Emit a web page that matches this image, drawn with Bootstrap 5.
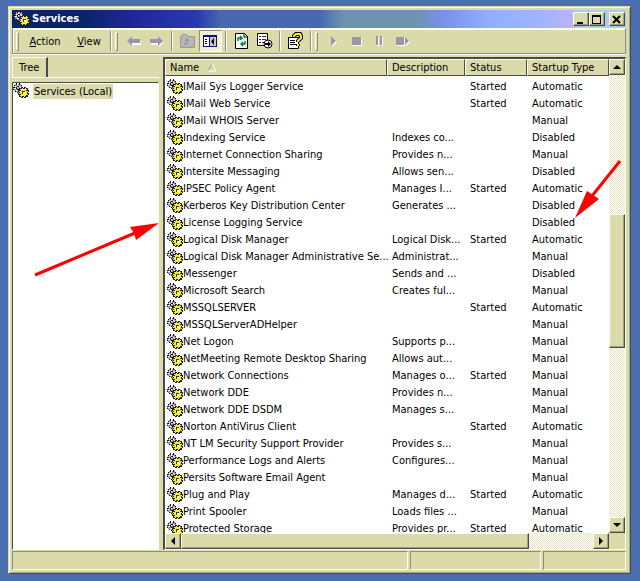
<!DOCTYPE html>
<html lang="en">
<head>
<meta charset="utf-8">
<meta name="viewport" content="width=device-width, initial-scale=1">
<title>Services</title>
<link href="https://cdn.jsdelivr.net/npm/bootstrap@5.3.0/dist/css/bootstrap.min.css" rel="stylesheet">
<style>
:root{--face:#dadaaa;--dk:#8c8c8c;--sh:#4a4a4a;--lt:#fffff0}
body{background:#4a6eae;font:11px/17px "DejaVu Sans Condensed","Noto Sans",sans-serif;color:#000;padding:6px 9px 7px 8px}
button{font:inherit;color:inherit;padding:0;border:0;background:none}
.win{background:var(--face);border:1px solid var(--face);border-right-color:var(--sh);border-bottom-color:var(--sh);box-shadow:inset 1px 1px var(--lt),inset -1px -1px #a8a888;padding:3px 4px 3px 3px}
.titlebar{height:18px;background:linear-gradient(90deg,#0a246a 0,#0a246a 12%,#20289a 20%,#2838b0 30%,#4568ae 34%,#4568ae 50%,#6c94b0 54%,#6c94b0 66%,#7890e8 70%,#90b0ff 78%,#a0b4ff 86%,#b8b4f4 91%,#a8ccf4 93%,#a8ccf4 100%);color:#fff;padding:0 1px 0 2px}
.titlebar h1{font:bold 11px/18px "DejaVu Sans Condensed","Noto Sans",sans-serif;padding-left:2px}
.raised{background:var(--face);border:1px solid var(--lt);border-right-color:var(--sh);border-bottom-color:var(--sh);box-shadow:inset -1px -1px #a0a080}
.capbtn{width:16px;height:14px}
.toolbar{height:26px;border:1px solid var(--dk);border-top-color:var(--lt);box-shadow:inset 1px 1px var(--lt),0 1px var(--lt);padding-left:3px}
.grip{width:3px;height:19px;border:1px solid var(--lt);border-right-color:var(--dk);border-bottom-color:var(--dk)}
.rule{width:2px;height:20px;margin:0 3px;border-left:1px solid var(--dk);border-right:1px solid var(--lt)}
.menu1{width:52px}.menu2{width:36px}
.toolbtn{width:23px;height:22px}
.pressed{border:1px solid var(--dk);border-right-color:var(--lt);border-bottom-color:var(--lt);background:#f0f0d8}
.panes{padding-top:3px}
.tree{width:147px}
.treetab{width:36px;height:20px;border-top:1px solid var(--lt);border-left:1px solid var(--lt);border-right:2px solid var(--sh);padding-left:6px;text-align:left}
.treebody{border-top:1px solid var(--lt);padding-top:4px}
.sunken{background:#fff;border:2px solid var(--sh);border-right:1px solid var(--lt);border-bottom:1px solid var(--lt)}
.treebox{border-width:1px}
.treeitem{background:var(--face);padding:0 1px;line-height:15px}
.listpane{display:grid;grid-template-columns:minmax(0,1fr) 16px;grid-template-rows:minmax(0,1fr) 16px}
.svc{table-layout:fixed;width:100%;border-collapse:separate;border-spacing:0}
.svc th{height:17px;line-height:15px;font-weight:400;background:var(--face);border:1px solid var(--lt);border-right-color:var(--sh);border-bottom-color:var(--sh);padding:0 4px;white-space:nowrap}
.svc td{height:17px;line-height:17px;padding:0 0 0 5px;white-space:nowrap}
.svc td:first-child{padding-left:2px}
.svc tbody::before{content:"";display:block;height:2px}
.c1{width:222px}.c2{width:78px}.c3{width:62px}
.track{background:repeating-conic-gradient(#fff 0 25%,#e4e4c0 0 50%) 0 0/2px 2px}
.corner{background:var(--face)}
.sb{width:16px;height:16px;flex:none}
.vgap1{flex:139 1 0}.vthumb{flex:133 1 0}.vgap2{flex:169 1 0}
.hthumb{flex:1 1 350px}.hgap{flex:0 0 64px}
.statusbar{height:20px;padding-top:1px;gap:2px}
.cell{border:1px solid var(--dk);border-right-color:var(--lt);border-bottom-color:var(--lt)}
.st2{width:131px}.st3{width:83px}
.notes{left:0;top:0;pointer-events:none}
svg{display:block;flex:none}
</style>
<script src="https://cdn.jsdelivr.net/npm/bootstrap@5.3.0/dist/js/bootstrap.bundle.min.js"></script>
</head>
<body class="vh-100 overflow-hidden d-flex flex-column position-relative">
<svg class="d-none"><defs>
<symbol id="gears" viewBox="0 0 16 16">
<g shape-rendering="crispEdges">
<path d="M3 0h1v1h2V0h1v1h1v1h1v2h1v3H9v1H8v1H6v1H4V9H2V8H1V7H0V4h1V2h1V1h1z" fill="#9a9aa8"/>
<path d="M3 0h1v2H3zM6 0h1v2H6zM1 2h1v1H1zM8 2h1v1H8zM0 4h2v1H0zM0 6h1v1H0zM2 8h1v1H2zM4 3h2v1H4zM3 4h1v2H3zM4 6h2v1H4zM4 9h1v1H4z" fill="#111"/>
<path d="M4 1h1v2H4zM2 3h1v1H2zM1 5h2v1H1zM3 7h2v1H3zM6 3h1v1H6zM7 4h2v1H7zM4 4h1v1H4z" fill="#fff"/>
<path d="M8 4h2v1h1V4h2v1h2v2h1v2h-1v1h1v2h-1v2h-2v1h-2v-1h-1v1H8v-1H6v-2H5v-2h1V9H5V7h1V5h2z" fill="#222"/>
<path d="M9 5h1v1h2V5h1v1h1v1h-1v1h2v1h-1v2h1v1h-2v1h1v0h-2v1h-1v-1H9v1H8v-1H7v-1h1v-1H6v-1h1V9H6V8h2V7H7V6h2z" fill="#f2ee30"/>
<path d="M9 8h3v3H9z" fill="#333"/><path d="M10 9h2v2h-2z" fill="#fff"/>
</g>
</symbol></defs></svg>
<main class="win flex-grow-1 d-flex flex-column overflow-hidden">
<header class="titlebar d-flex align-items-center flex-shrink-0">
<svg width="16" height="16"><use href="#gears"/></svg><h1 class="m-0 flex-grow-1">Services</h1>
<button class="raised capbtn" aria-label="Minimize"><svg width="12" height="11"><path d="M3 8h6v2H3z"/></svg></button>
<button class="raised capbtn" aria-label="Maximize"><svg width="13" height="11"><path d="M2 1h9v9H2zM3 3v6h7V3z" fill-rule="evenodd"/></svg></button>
<button class="raised capbtn ms-1" aria-label="Close"><svg width="13" height="11" stroke="#000" stroke-width="2"><path d="M3 2l7 7M10 2l-7 7"/></svg></button>
</header>
<nav class="toolbar d-flex align-items-center flex-shrink-0" aria-label="Toolbar">
<span class="grip"></span>
<button class="menu1"><u>A</u>ction</button><button class="menu2"><u>V</u>iew</button>
<span class="rule"></span><span class="grip"></span>
<button class="toolbtn ms-1" aria-label="Back"><svg width="23" height="20"><path d="M6 11l5-4v3h8v4h-8v2z" fill="#fff"/><path d="M5 10l5-5v3h8v4h-8v3z" fill="#9896a8"/></svg></button>
<button class="toolbtn" aria-label="Forward"><svg width="23" height="20"><path d="M19 11l-5 5v-2H6v-3z" fill="#fff"/><path d="M18 10l-5-5v3H5v4h8v3z" fill="#9896a8"/></svg></button>
<span class="rule"></span>
<button class="toolbtn" aria-label="Up one level"><svg width="23" height="20"><path d="M4.500 5.500l2-2h4l1 2h7v11h-14z" fill="#b8b6b0" stroke="#9896a0"/><path d="M11 13V8M9 10l2-2 2 2M8 13h3" stroke="#8886a0" fill="none"/></svg></button>
<button class="toolbtn pressed" aria-label="Show tree"><svg width="21" height="20"><path d="M3 4h14v12H3z" fill="#101070"/><path d="M4 6h5v9H4z" fill="#fff"/><path d="M10 6h6v9h-6z" fill="#c8c8c8"/><path d="M5 8h2v1H5zM5 10h2v1H5zM5 12h2v1H5zM14 7v7l-3-3.500z"/></svg></button>
<span class="rule"></span>
<button class="toolbtn" aria-label="Refresh"><svg width="23" height="20"><path d="M5.500 2.500h9l3 3v12h-12z" fill="#fff" stroke="#000"/><path d="M14 3v3h4" fill="none" stroke="#000"/><path d="M8 10V7h4M10 5l2 2-2 2M15 10v3h-4M13 11l-2 2 2 2" fill="none" stroke="#00843c" stroke-width="1.500"/></svg></button>
<button class="toolbtn" aria-label="Export list"><svg width="23" height="20"><path d="M4.500 2.500h10v12h-10z" fill="#fff" stroke="#000"/><path d="M6 5.500h2M9 5.500h4M6 8.500h2M9 8.500h4M6 11.500h2M9 11.500h3" stroke="#226"/><circle cx="15" cy="13" r="4" fill="#fff" stroke="#000"/><path d="M12 12h3v-2l3 3-3 3v-2h-3z"/></svg></button>
<span class="rule"></span>
<button class="toolbtn" aria-label="Help"><svg width="23" height="20"><path d="M4.500 6.500h10v11h-10z" fill="#fff" stroke="#000"/><path d="M6 9.500h5M6 11.500h5M6 13.500h7" stroke="#000"/><path d="M10 6V5l2-2h4l1 2v2l-3 3v1M14 13v2" fill="none" stroke="#000" stroke-width="4"/><path d="M10 6V5l2-2h4l1 2v2l-3 3v1M14 13v2" fill="none" stroke="#f8f020" stroke-width="2"/></svg></button>
<span class="rule"></span><span class="grip"></span>
<button class="toolbtn ms-1" aria-label="Start"><svg width="23" height="20"><path d="M10 6l5 5-5 5z" fill="#fff"/><path d="M9 5l5 5-5 5z" fill="#9896a8"/></svg></button>
<button class="toolbtn" aria-label="Stop"><svg width="23" height="20"><path d="M8 7h9v8H8z" fill="#fff"/><path d="M7 6h9v8H7z" fill="#9896a8"/></svg></button>
<button class="toolbtn" aria-label="Pause"><svg width="23" height="20"><path d="M9 6h2v9H9zM13 6h2v9h-2z" fill="#fff"/><path d="M8 5h2v9H8zM12 5h2v9h-2z" fill="#9896a8"/></svg></button>
<button class="toolbtn" aria-label="Restart"><svg width="23" height="20"><path d="M6 7h8v8H6zM15 7l4 4-4 4z" fill="#fff"/><path d="M5 6h8v8H5zM14 6l4 4-4 4z" fill="#9896a8"/></svg></button>
</nav>
<div class="panes d-flex flex-grow-1 overflow-hidden gap-1">
<section class="tree d-flex flex-column flex-shrink-0">
<button class="treetab">Tree</button>
<div class="treebody flex-grow-1 d-flex flex-column"><div class="sunken treebox flex-grow-1"><div class="d-flex align-items-center"><svg width="16" height="16"><use href="#gears"/></svg><span class="treeitem ms-1">Services (Local)</span></div></div></div>
</section>
<section class="sunken listpane flex-grow-1">
<div class="overflow-hidden">
<table class="svc"><colgroup><col class="c1"><col class="c2"><col class="c3"><col></colgroup>
<thead><tr><th><span class="d-flex align-items-center gap-2">Name <svg width="10" height="9"><path d="M1 8l4-7" stroke="#999"/><path d="M5 1l4 7H1" stroke="#fff" fill="none"/></svg></span></th><th>Description</th><th>Status</th><th>Startup Type</th></tr></thead>
<tbody id="rows"></tbody></table>
</div>
<div class="track d-flex flex-column"><button class="raised sb" aria-label="Scroll up"><svg width="14" height="14"><path d="M3 9l4-4 4 4z"/></svg></button><span class="vgap1"></span><span class="raised vthumb"></span><span class="vgap2"></span><button class="raised sb" aria-label="Scroll down"><svg width="14" height="14"><path d="M3 5l4 4 4-4z"/></svg></button></div>
<div class="track d-flex"><button class="raised sb" aria-label="Scroll left"><svg width="14" height="14"><path d="M9 3L5 7l4 4z"/></svg></button><span class="raised hthumb"></span><span class="hgap"></span><button class="raised sb" aria-label="Scroll right"><svg width="14" height="14"><path d="M5 3l4 4-4 4z"/></svg></button></div>
<div class="corner"></div>
</section>
</div>
<footer class="statusbar d-flex flex-shrink-0"><span class="cell flex-grow-1"></span><span class="cell st2"></span><span class="cell st3"></span></footer>
</main>
<svg class="notes position-absolute" width="640" height="300" aria-hidden="true"><g fill="red" stroke="red"><path d="M35 275l100-42" stroke-width="3"/><path d="M159 223l-29 4 4 6 2 7z" stroke="none"/><path d="M620 161l-28 35" stroke-width="3"/><path d="M575 218l12-27 6 4 6 4z" stroke="none"/></g></svg>
<script>
const data=`IMail Sys Logger Service||Started|Automatic
IMail Web Service||Started|Automatic
IMail WHOIS Server|||Manual
Indexing Service|Indexes co...||Disabled
Internet Connection Sharing|Provides n...||Manual
Intersite Messaging|Allows sen...||Disabled
IPSEC Policy Agent|Manages I...|Started|Automatic
Kerberos Key Distribution Center|Generates ...||Disabled
License Logging Service|||Disabled
Logical Disk Manager|Logical Disk...|Started|Automatic
Logical Disk Manager Administrative Se...|Administrat...||Manual
Messenger|Sends and ...||Disabled
Microsoft Search|Creates ful...||Manual
MSSQLSERVER||Started|Automatic
MSSQLServerADHelper|||Manual
Net Logon|Supports p...||Manual
NetMeeting Remote Desktop Sharing|Allows aut...||Manual
Network Connections|Manages o...|Started|Manual
Network DDE|Provides n...||Manual
Network DDE DSDM|Manages s...||Manual
Norton AntiVirus Client||Started|Automatic
NT LM Security Support Provider|Provides s...||Manual
Performance Logs and Alerts|Configures...||Manual
Persits Software Email Agent|||Manual
Plug and Play|Manages d...|Started|Automatic
Print Spooler|Loads files ...||Manual
Protected Storage|Provides pr...|Started|Automatic`;
document.getElementById('rows').innerHTML=data.split('\n').map(r=>{const[n,...c]=r.split('|');return `<tr><td><span class="d-flex align-items-center"><svg width="16" height="16"><use href="#gears"/></svg><span>${n}</span></span></td>${c.map(t=>`<td>${t}</td>`).join('')}</tr>`}).join('');
</script>
</body>
</html>
